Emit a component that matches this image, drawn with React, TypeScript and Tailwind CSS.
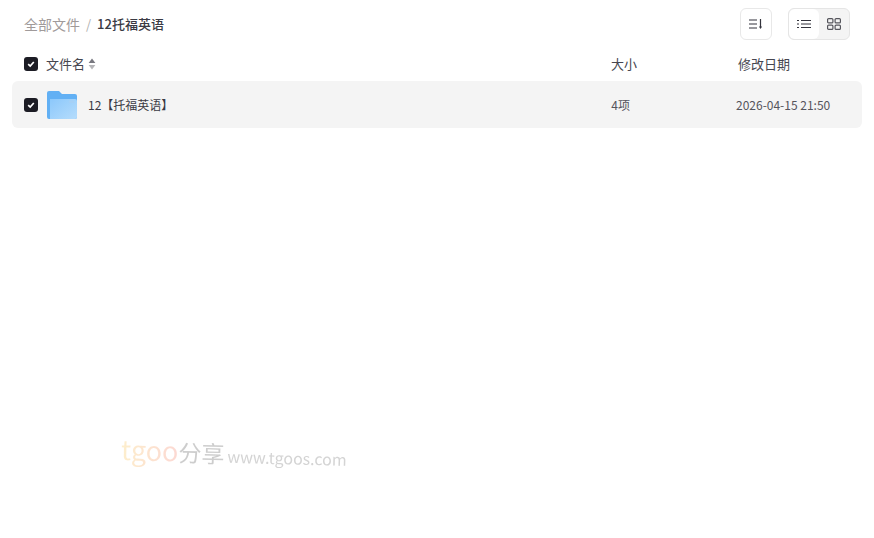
import React from "react";

const font = { };

const Checkbox = () => (
  <span className="flex h-[14px] w-[14px] items-center justify-center rounded-[3px] bg-[#1c1c24]">
    <svg width="10" height="10" viewBox="0 0 10 10" fill="none">
      <path d="M2.2 5.2 4.2 7.1 7.8 3" stroke="#fff" strokeWidth="1.7" />
    </svg>
  </span>
);

const SortCaret = () => (
  <svg width="8" height="12" viewBox="0 0 8 12" className="ml-[3px]">
    <path d="M4 .5 7.4 5H.6z" fill="#77777f" />
    <path d="M4 11.5 .6 7h6.8z" fill="#b5b5b8" />
  </svg>
);

const FolderIcon = () => (
  <svg width="30" height="28" viewBox="0 0 30 28">
    <defs>
      <linearGradient id="folderFront" x1="0" y1="0" x2="1" y2="1">
        <stop offset="0" stopColor="#8cc8fb" />
        <stop offset="1" stopColor="#b5dcfc" />
      </linearGradient>
    </defs>
    <path d="M0 2a2 2 0 0 1 2-2h10l3 3h13a2 2 0 0 1 2 2v21a2 2 0 0 1-2 2H2a2 2 0 0 1-2-2z" fill="#62b0f4" />
    <path d="M3 8h25a2 2 0 0 1 2 2v16a2 2 0 0 1-2 2H3z" fill="url(#folderFront)" />
    <rect x="22" y="9.500" width="5" height="2.500" rx="0.500" fill="#a5d0f6" />
  </svg>
);

export default function App() {
  return (
    <div className="relative h-[538px] w-[874px] overflow-hidden bg-white font-['Noto_Sans_CJK_SC','Noto_Sans',sans-serif] text-[#3a3a44]">
      <div className="flex h-12 items-center justify-between pl-6 pr-6">
        <div className="flex items-center text-[13px]">
          <span className="text-[14px] leading-none text-[#a09a9a]">全部文件</span>
          <span className="mx-[6px] text-[#b0b0b0]">/</span>
          <span className="font-medium text-[#3a3a44]">12托福英语</span>
        </div>
        <div className="flex items-center gap-4">
          <button className="flex h-8 w-8 items-center justify-center rounded-md border border-[#e8e8e8] bg-white">
            <svg width="14" height="12" viewBox="0 0 14 12" fill="none" stroke="#33333c" strokeWidth="1.200">
              <path d="M0 2h8M0 6h8M0 10h8" />
              <path d="M11.500 1v9" />
              <path d="M10 8.500h3L11.500 11z" fill="#33333c" stroke="none" />
            </svg>
          </button>
          <div className="flex h-8 w-[62px] overflow-hidden rounded-md border border-[#e5e5e5] bg-[#f4f4f4]">
            <span className="flex w-[30px] items-center justify-center rounded-md bg-white">
              <svg width="14" height="10" viewBox="0 0 14 10" fill="none" stroke="#33333c" strokeWidth="1.200">
                <path d="M0 1.500h2M4 1.500h10M0 5h2M4 5h10M0 8.500h2M4 8.500h10" />
              </svg>
            </span>
            <span className="flex flex-1 items-center justify-center">
              <svg width="14" height="12" viewBox="0 0 14 12" fill="none" stroke="#55555c" strokeWidth="1.200">
                <rect x="0.600" y="0.600" width="5.300" height="4.300" rx="1" />
                <rect x="8.100" y="0.600" width="5.300" height="4.300" rx="1" />
                <rect x="0.600" y="7.100" width="5.300" height="4.300" rx="1" />
                <rect x="8.100" y="7.100" width="5.300" height="4.300" rx="1" />
              </svg>
            </span>
          </div>
        </div>
      </div>

      <div className="flex h-8 items-center pl-6 text-[13px] text-[#46464f]">
        <Checkbox />
        <span className="ml-2 flex items-center">
          文件名
          <SortCaret />
        </span>
        <span className="ml-[515px]">大小</span>
        <span className="ml-[101px]">修改日期</span>
      </div>

      <div className="mx-3 mt-[1px] flex h-[47px] items-center rounded-md bg-[#f4f4f4] pl-3 text-[12px] text-[#3a3a44]">
        <Checkbox />
        <span className="ml-[9px] flex">
          <FolderIcon />
        </span>
        <span className="ml-[11px]">12【托福英语】</span>
        <span className="ml-[438px] text-[#55555c]">4项</span>
        <span className="ml-[106px] text-[#55555c]">2026-04-15 21:50</span>
      </div>

      <div className="pointer-events-none absolute left-[121px] top-[434px] flex rotate-[1.5deg] items-baseline whitespace-nowrap opacity-70">
        <span className="bg-gradient-to-r from-[#fde8b8] to-[#fbc9c0] bg-clip-text text-[27px] leading-9 text-transparent">tgoo</span>
        <span className="text-[23px] leading-9 text-[#b9b9b9]">分享</span>
        <span className="ml-[3px] text-[16px] leading-9 text-[#c2c2c2]">www.tgoos.com</span>
      </div>
    </div>
  );
}
